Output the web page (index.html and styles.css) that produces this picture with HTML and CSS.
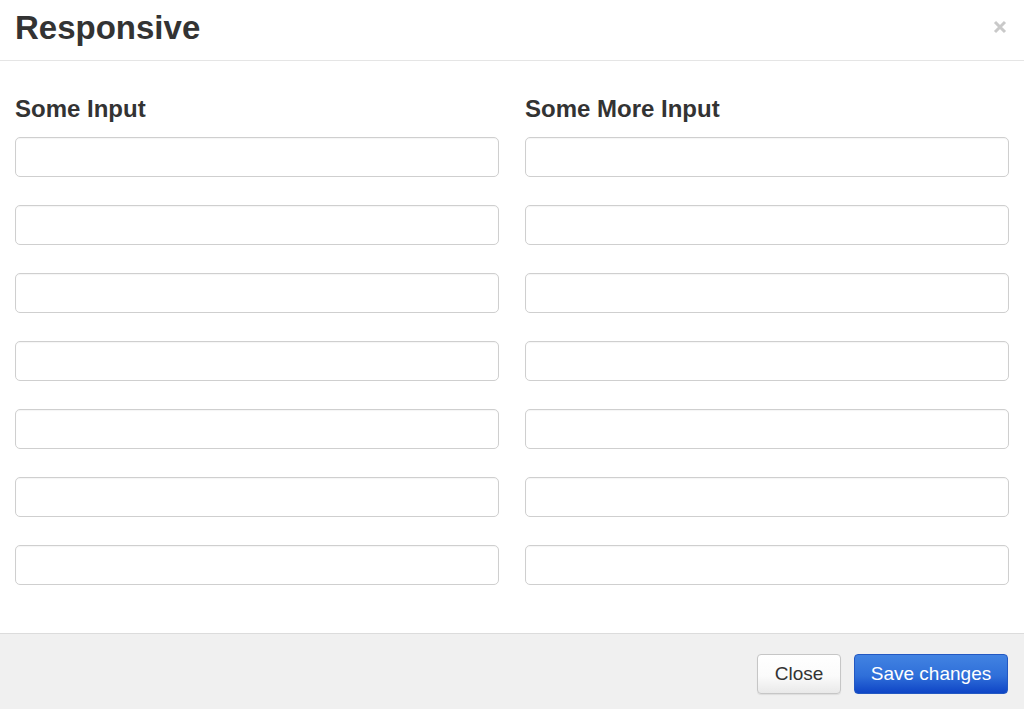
FILE: index.html
```html
<!DOCTYPE html>
<html>
<head>
<meta charset="utf-8">
<link rel="stylesheet" href="styles.css">
</head>
<body>
<div class="modal">
  <div class="modal-header">
    <h1 class="title">Responsive</h1>
    <button class="close-x" aria-label="Close">
      <svg width="14" height="14" viewBox="0 0 14 14"><path d="M2 2 L12 12 M12 2 L2 12" stroke="#c9c9c9" stroke-width="3" stroke-linecap="butt"/></svg>
    </button>
  </div>
  <div class="modal-body">
    <div class="col">
      <h4 class="label">Some Input</h4>
      <input class="field" type="text">
      <input class="field" type="text">
      <input class="field" type="text">
      <input class="field" type="text">
      <input class="field" type="text">
      <input class="field" type="text">
      <input class="field" type="text">
    </div>
    <div class="col">
      <h4 class="label">Some More Input</h4>
      <input class="field" type="text">
      <input class="field" type="text">
      <input class="field" type="text">
      <input class="field" type="text">
      <input class="field" type="text">
      <input class="field" type="text">
      <input class="field" type="text">
    </div>
  </div>
  <div class="modal-footer">
    <button class="btn btn-default">Close</button>
    <button class="btn btn-primary">Save changes</button>
  </div>
</div>
</body>
</html>
```

FILE: styles.css
```css
html, body {
  margin: 0;
  padding: 0;
  background: #fff;
  font-family: "Liberation Sans", Arial, Helvetica, sans-serif;
  color: #333;
}
.modal {
  width: 1024px;
  height: 709px;
  display: flex;
  flex-direction: column;
  overflow: hidden;
}
.modal-header {
  height: 60px;
  border-bottom: 1px solid #e5e5e5;
  display: flex;
  align-items: flex-start;
  justify-content: space-between;
  padding: 0 15px;
}
.title {
  margin: 8px 0 0 0;
  font-size: 33px;
  line-height: 40px;
  font-weight: bold;
  color: #333;
}
.close-x {
  margin: 20px 2px 0 0;
  padding: 0;
  border: 0;
  background: none;
  width: 14px;
  height: 14px;
  display: flex;
}
.modal-body {
  padding: 34px 15px 48px 15px;
  display: grid;
  grid-template-columns: 484px 484px;
  column-gap: 26px;
}
.col {
  display: flex;
  flex-direction: column;
  gap: 28px;
}
.label {
  margin: 0 0 -14px 0;
  font-size: 24px;
  line-height: 28px;
  font-weight: bold;
  color: #333;
}
.field {
  box-sizing: border-box;
  width: 484px;
  height: 40px;
  margin: 0;
  border: 1.5px solid #cfcfcf;
  border-radius: 5px;
  background: #fff;
  box-shadow: inset 0 1px 1px rgba(0,0,0,0.04);
}
.modal-footer {
  flex: 1;
  border-top: 1px solid #dcdcdc;
  background: #f0f0f0;
  display: flex;
  justify-content: flex-end;
  align-items: flex-start;
  gap: 13px;
  padding: 20px 16px 0 0;
}
.btn {
  box-sizing: border-box;
  height: 40px;
  font-family: "Liberation Sans", Arial, Helvetica, sans-serif;
  font-size: 19px;
  border-radius: 4px;
  padding: 0;
  margin: 0;
}
.btn-default {
  width: 84px;
  color: #333;
  background: linear-gradient(#ffffff, #fbfbfb 55%, #e9e9e9);
  border: 1px solid #c6c6c6;
  box-shadow: 0 1px 1px rgba(0,0,0,0.08);
}
.btn-primary {
  width: 154px;
  color: #fff;
  background: linear-gradient(#4283e2, #2f6fd9 55%, #0f45c6);
  border: 1px solid #2358c2;
}
```
